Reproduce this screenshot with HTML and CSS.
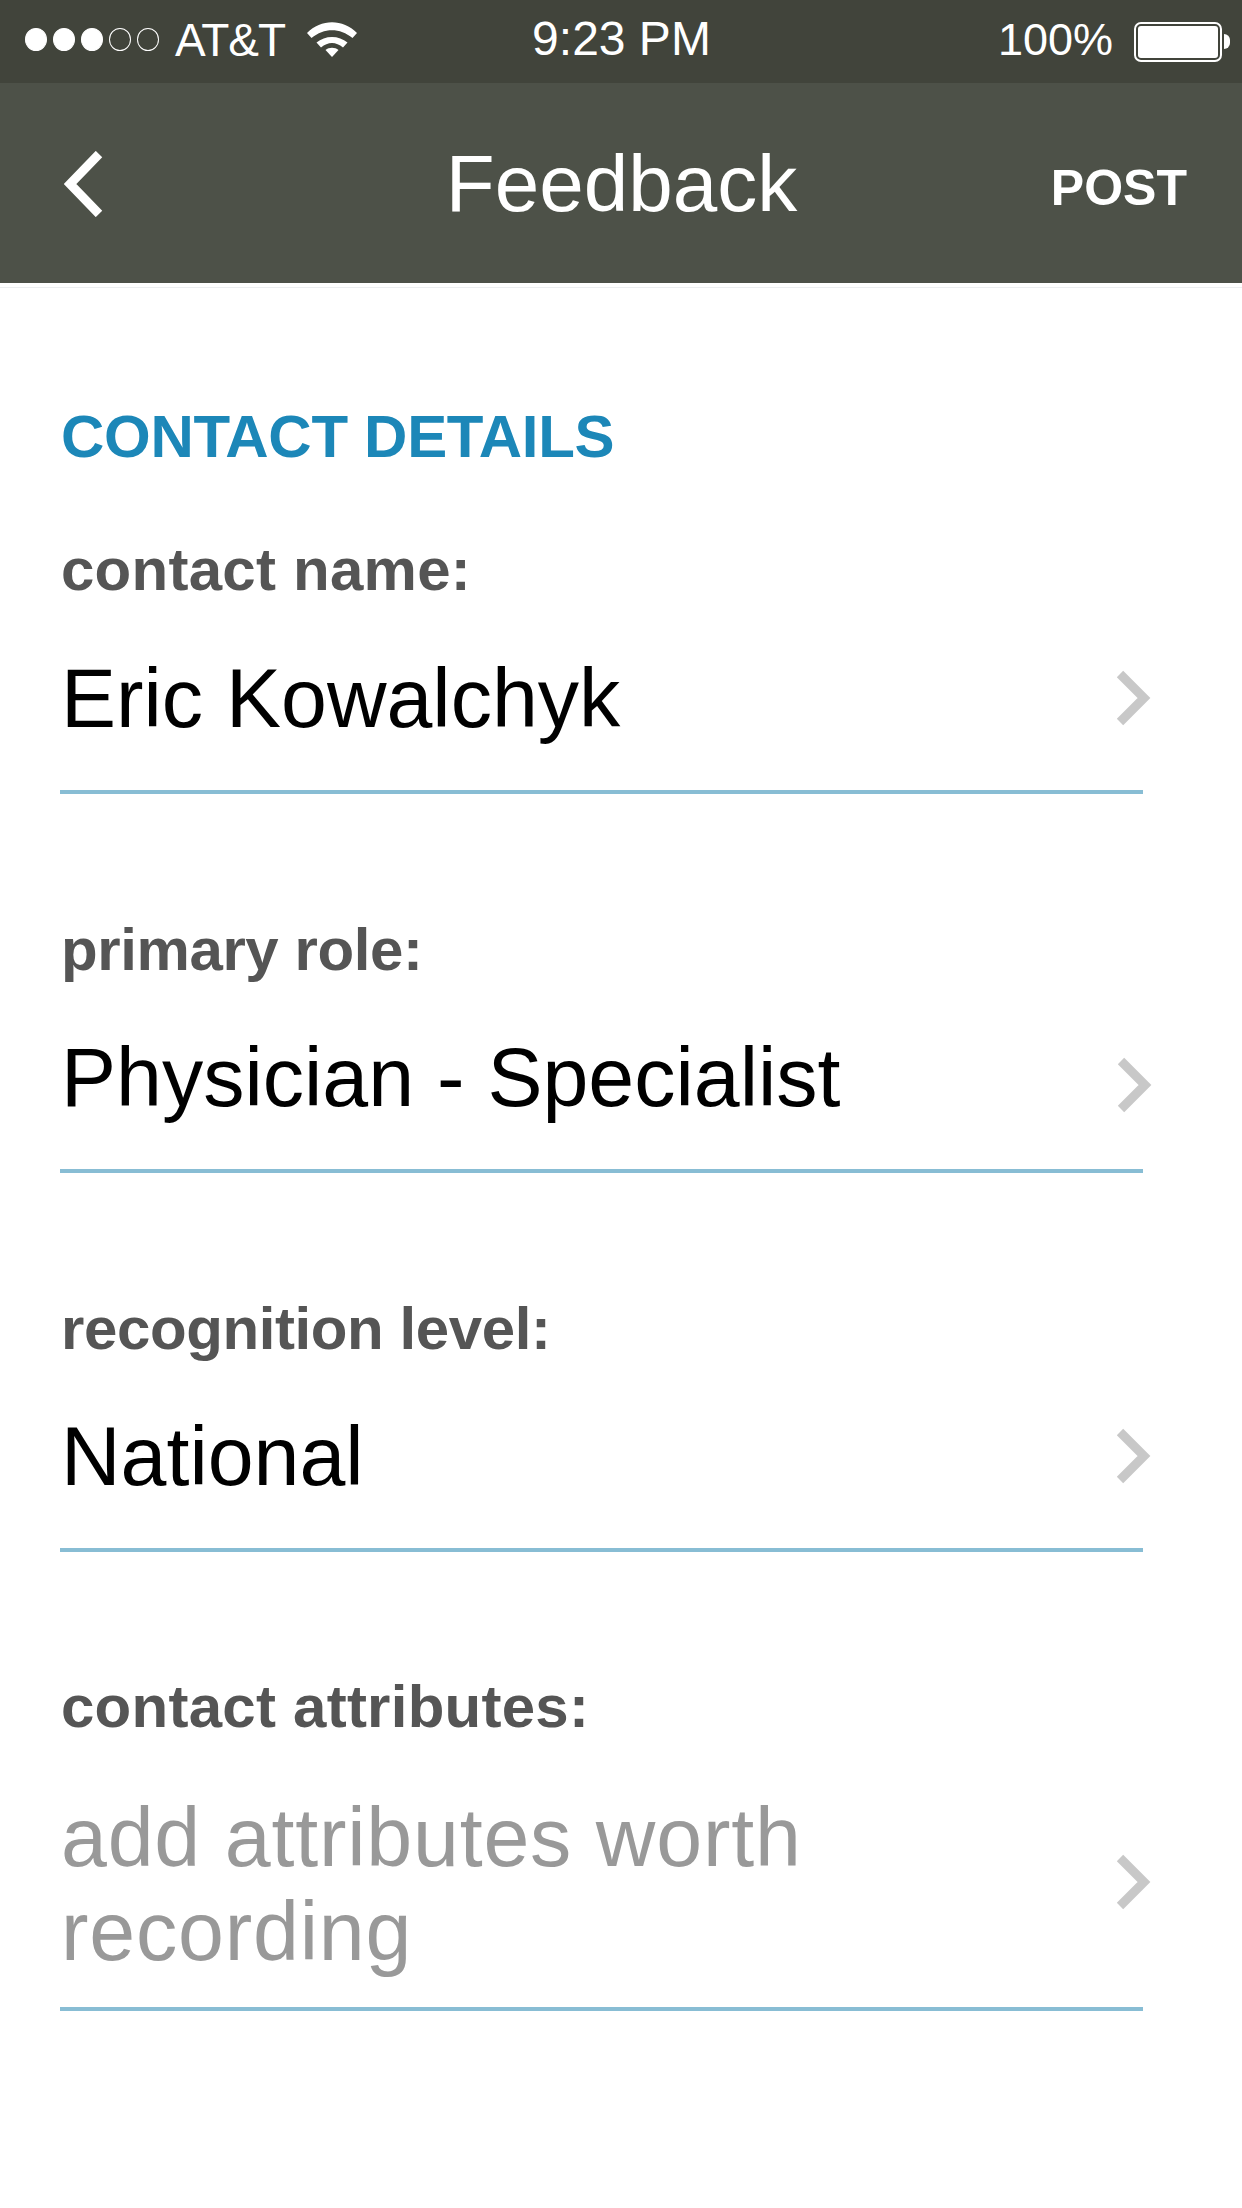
FILE: index.html
```html
<!DOCTYPE html>
<html lang="en">
<head>
<meta charset="utf-8">
<title>Feedback</title>
<link rel="stylesheet" href="styles.css">
</head>
<body>
<div class="screen">
  <header class="status">
    <div class="status-left">
      <div class="signal">
        <span class="dot on"></span><span class="dot on"></span><span class="dot on"></span><span class="dot"></span><span class="dot"></span>
      </div>
      <span class="carrier">AT&amp;T</span>
      <svg class="wifi" viewBox="0 0 50 35" width="50" height="35" aria-hidden="true">
        <path d="M0 11 C14 -3.5 36 -3.5 50 11 L45.5 16 C33 5.5 17 5.5 4.5 16 Z" />
        <path d="M9.5 20.5 C18 13 32 13 40.5 20.5 L36 25.5 C29 19.5 21 19.5 14 25.5 Z" />
        <path d="M18.5 28 C22 25 28 25 31.5 28 L25 35 Z" />
      </svg>
    </div>
    <span class="clock">9:23 PM</span>
    <div class="status-right">
      <span class="percent">100%</span>
      <div class="battery"><div class="battery-body"><div class="battery-fill"></div></div><div class="battery-nub"></div></div>
    </div>
  </header>
  <nav class="navbar">
    <svg class="back" viewBox="0 0 40 66" width="40" height="66" aria-hidden="true">
      <path d="M35 3 L6 33 L35 63" />
    </svg>
    <h1 class="title">Feedback</h1>
    <span class="post">POST</span>
  </nav>
  <main class="content">
    <h2 class="section">CONTACT DETAILS</h2>
    <section class="field">
      <div class="label">contact name:</div>
      <div class="row">
        <div class="value">Eric Kowalchyk</div>
        <svg class="chev" viewBox="0 0 40 58" width="40" height="58" aria-hidden="true"><path d="M7 5 L31 29 L7 53" /></svg>
      </div>
    </section>
    <section class="field">
      <div class="label label-tight">primary role:</div>
      <div class="row">
        <div class="value">Physician - Specialist</div>
        <svg class="chev chev-low" viewBox="0 0 40 58" width="40" height="58" aria-hidden="true"><path d="M7 5 L31 29 L7 53" /></svg>
      </div>
    </section>
    <section class="field">
      <div class="label label-tight">recognition level:</div>
      <div class="row">
        <div class="value">National</div>
        <svg class="chev" viewBox="0 0 40 58" width="40" height="58" aria-hidden="true"><path d="M7 5 L31 29 L7 53" /></svg>
      </div>
    </section>
    <section class="field">
      <div class="label">contact attributes:</div>
      <div class="row row-multi">
        <div class="value placeholder">add attributes worth recording</div>
        <svg class="chev chev-high" viewBox="0 0 40 58" width="40" height="58" aria-hidden="true"><path d="M7 5 L31 29 L7 53" /></svg>
      </div>
    </section>
  </main>
</div>
</body>
</html>
```

FILE: styles.css
```css
* { box-sizing: border-box; margin: 0; padding: 0; }
html, body { background: #fff; }
body { font-family: "Liberation Sans", Arial, sans-serif; width: 1242px; height: 2208px; overflow: hidden; }
.screen { width: 1242px; height: 2208px; display: flex; flex-direction: column; }

.status { height: 83px; background: #41443b; color: #fff; display: grid; grid-template-columns: 1fr auto 1fr; align-items: center; font-size: 46px; padding: 0 12px 0 25px; }
.status-left { display: flex; align-items: center; }
.signal { display: flex; gap: 6px; margin-top: -4px; }
.dot { width: 22px; height: 23px; border-radius: 50%; border: 1.5px solid #fff; }
.dot.on { background: #fff; }
.carrier { margin-left: 16px; letter-spacing: -1px; margin-top: -4px; }
.wifi { margin-left: 22px; fill: #fff; margin-top: -4px; }
.clock { font-size: 48px; line-height: 76px; margin-left: -12px; margin-bottom: 5px; }
.status-right { display: flex; align-items: center; justify-content: flex-end; }
.percent { font-size: 45px; margin-right: 21px; margin-top: -4px; }
.battery { display: flex; align-items: center; }
.battery-body { width: 88px; height: 40px; border: 2px solid #fff; border-radius: 7px; padding: 2px; }
.battery-fill { width: 100%; height: 100%; background: #fff; border-radius: 3px; }
.battery-nub { width: 6px; height: 15px; background: #fff; border-radius: 0 8px 8px 0; margin-left: 2px; }

.navbar { height: 200px; background: #4d5148; color: #fff; display: grid; grid-template-columns: 1fr auto 1fr; align-items: center; padding: 0 55px 0 64px; }
.back { fill: none; stroke: #fff; stroke-width: 9; margin-top: 2px; }
.title { font-weight: 400; font-size: 80px; margin: 2px 0 0 -8px; }
.post { justify-self: end; font-weight: 700; font-size: 50px; margin-top: 9px; }

.content { flex: 1; border-top: 1px solid #eceef0; margin-top: 4px; padding: 119px 99px 0 60px; }
.section { margin-left: 1px; font-size: 60px; line-height: 60px; font-weight: 700; color: #1c87b8; margin-bottom: 72px; letter-spacing: -0.3px; }
.field { border-bottom: 4px solid #88bdd4; margin-bottom: 124px; }
.label { margin-left: 1px; padding-top: 1px; font-size: 60px; line-height: 60px; font-weight: 700; color: #555; letter-spacing: 0.25px; }
.label-tight { letter-spacing: -0.4px; padding-top: 2px; }
.row { display: flex; align-items: center; justify-content: space-between; padding: 51px 0 45px 1px; }
.label-tight + .row { padding-top: 50px; }
.row-multi { padding: 53px 0 29px 1px; }
.value { font-size: 82.5px; line-height: 94px; color: #000; max-width: 820px; }
.placeholder { color: #999; letter-spacing: 0.8px; }
.chev { fill: none; stroke: #c8c8c8; stroke-width: 9; flex: none; margin-right: -10px; }
.chev-low { margin: 15px -11px 0 0; }
.chev-high { margin-top: -4px; }
```
